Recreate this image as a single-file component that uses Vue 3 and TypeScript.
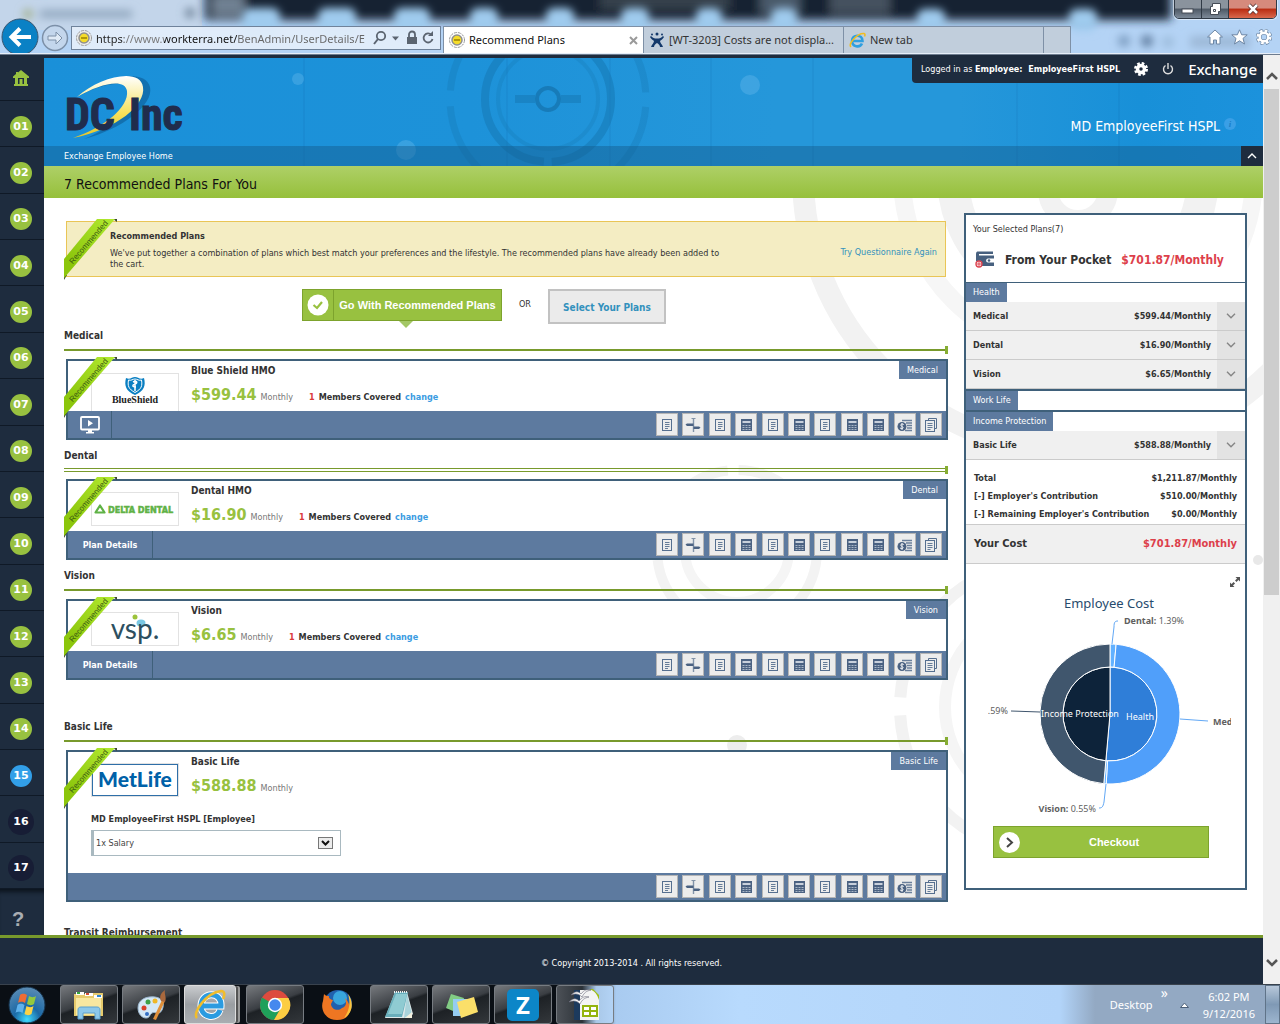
<script setup lang="ts">
import { ref } from 'vue'

type ToolKind = 'doc' | 'sign' | 'calc' | 'money' | 'copy'
interface Plan {
  section: string
  name: string
  price: string
  tag: string
  logo: 'blue' | 'delta' | 'vsp' | 'metlife'
  members?: number
  bar: 'video' | 'details' | 'none'
  doubled?: boolean
}

const tools: ToolKind[] = ['doc', 'sign', 'doc', 'calc', 'doc', 'calc', 'doc', 'calc', 'calc', 'money', 'copy']

const plans: Plan[] = [
  { section: 'Medical', name: 'Blue Shield HMO', price: '$599.44', tag: 'Medical', logo: 'blue', members: 1, bar: 'video' },
  { section: 'Dental', name: 'Dental HMO', price: '$16.90', tag: 'Dental', logo: 'delta', members: 1, bar: 'details', doubled: true },
  { section: 'Vision', name: 'Vision', price: '$6.65', tag: 'Vision', logo: 'vsp', members: 1, bar: 'details' },
  { section: 'Basic Life', name: 'Basic Life', price: '$588.88', tag: 'Basic Life', logo: 'metlife', bar: 'none' },
]

const groups = [
  { title: 'Health', rows: [['Medical', '$599.44/Monthly'], ['Dental', '$16.90/Monthly'], ['Vision', '$6.65/Monthly']] },
  { title: 'Work Life', rows: [] as string[][] },
  { title: 'Income Protection', rows: [['Basic Life', '$588.88/Monthly']] },
]

const totals = [
  ['Total', '$1,211.87/Monthly'],
  ['[-] Employer\'s Contribution', '$510.00/Monthly'],
  ['[-] Remaining Employer\'s Contribution', '$0.00/Monthly'],
]

const steps = Array.from({ length: 17 }, (_, i) => ({
  label: String(i + 1).padStart(2, '0'),
  state: i < 14 ? 'done' : i === 14 ? 'current' : 'todo',
}))

const url = ref('https://www.workterra.net/BenAdmin/UserDetails/E')
const salary = ref('1x Salary')

const CX = 122
const CY = 124
function slice(r0: number, r1: number, from: number, to: number): string {
  const pt = (r: number, f: number) => {
    const a = f * 2 * Math.PI
    return `${(CX + r * Math.sin(a)).toFixed(2)} ${(CY - r * Math.cos(a)).toFixed(2)}`
  }
  const big = to - from > 0.5 ? 1 : 0
  return `M${pt(r1, from)}A${r1} ${r1} 0 ${big} 1 ${pt(r1, to)}L${pt(r0, to)}A${r0} ${r0} 0 ${big} 0 ${pt(r0, from)}Z`
}
const slices = [
  { d: slice(0, 47, 0, 0.5141), fill: '#2f7ed8' },
  { d: slice(0, 47, 0.5141, 1), fill: '#0d233a' },
  { d: slice(47, 70, 0, 0.0139), fill: '#62b1ff' },
  { d: slice(47, 70, 0.0139, 0.5086), fill: '#509ffa' },
  { d: slice(47, 70, 0.5086, 0.5141), fill: '#62b1ff' },
  { d: slice(47, 70, 0.5141, 1), fill: '#40566d' },
]
</script>

<template>
  <div class="desktop">
    <header class="chrome">
      <svg class="glass" viewBox="0 0 1280 54" preserveAspectRatio="none" aria-hidden="true">
        <defs>
          <filter id="soft" x="-5%" y="-50%" width="110%" height="200%"><feGaussianBlur stdDeviation="5" /></filter>
          <filter id="soft2" x="-50%" y="-50%" width="200%" height="200%"><feGaussianBlur stdDeviation="4" /></filter>
        </defs>
        <rect width="1280" height="54" fill="#b4d3f5" />
        <rect x="0" y="-10" width="202" height="40" fill="#c3d5ea" />
        <g filter="url(#soft)">
          <rect x="205" y="-20" width="966" height="40" fill="#172430" />
          <rect x="212" y="-6" width="32" height="22" fill="#6f8092" />
          <rect x="760" y="-10" width="40" height="24" fill="#4a5a6a" />
          <rect x="600" y="-10" width="130" height="20" fill="#34404c" />
          <rect x="830" y="-10" width="60" height="24" fill="#44515e" />
        </g>
        <g filter="url(#soft2)" fill="#9fcbee">
          <rect x="242" y="8" width="38" height="30" rx="8" /><rect x="318" y="8" width="38" height="30" rx="8" />
          <rect x="394" y="8" width="36" height="30" rx="8" /><rect x="470" y="8" width="28" height="24" rx="8" />
          <rect x="546" y="8" width="28" height="24" rx="8" /><rect x="621" y="8" width="28" height="24" rx="8" />
          <rect x="696" y="8" width="26" height="24" rx="8" /><rect x="771" y="8" width="26" height="24" rx="8" />
          <rect x="917" y="9" width="28" height="22" rx="8" /><rect x="1069" y="9" width="28" height="22" rx="8" />
        </g>
        <g filter="url(#soft2)">
          <circle cx="1124" cy="41" r="6" fill="#7c9cc0" /><circle cx="1147" cy="41" r="6" fill="#5f7c9e" />
          <circle cx="1168" cy="42" r="6" fill="#9dbcdc" /><rect x="1190" y="36" width="60" height="12" fill="#9db9d8" />
          <rect x="40" y="10" width="92" height="8" fill="#93a9c0" /><circle cx="28" cy="14" r="5" fill="#a3b08e" />
          <circle cx="190" cy="13" r="5" fill="#6d8197" />
        </g>
      </svg>

      <div class="window-controls">
        <button type="button" aria-label="Minimize"><svg width="14" height="12"><rect x="1" y="6" width="11" height="4" fill="#fff" stroke="#444b55" /></svg></button>
        <button type="button" aria-label="Restore"><svg width="14" height="14"><path d="M4.500 1.500h8v8h-2v3h-8v-8h2zM5.500 7.500h2v2h-2z" fill="#fff" stroke="#444b55" /></svg></button>
        <button type="button" class="close" aria-label="Close"><svg width="14" height="12"><path d="M3 2l8 8M11 2l-8 8" stroke="#4d2a2a" stroke-width="4" /><path d="M3 2l8 8M11 2l-8 8" stroke="#fff" stroke-width="2.500" /></svg></button>
      </div>

      <div class="toolbar">
        <button type="button" class="nav-back" aria-label="Back">
          <svg width="38" height="36" viewBox="0 0 38 36"><circle cx="19" cy="19" r="18" fill="#0a81c5" stroke="#3a5670" /><path d="M30 19H12M19 10.500L10.500 19l8.500 8.500" fill="none" stroke="#fff" stroke-width="4" /></svg>
        </button>
        <button type="button" class="nav-fwd" aria-label="Forward">
          <svg width="28" height="28" viewBox="0 0 28 28"><circle cx="14" cy="14" r="12.500" fill="#c3d6ec" stroke="#7c90a8" stroke-width="1.500" /><path d="M7 12h8V8l6 6-6 6v-4H7z" fill="#dfeaf6" stroke="#7c90a8" /></svg>
        </button>
        <div class="address">
          <svg width="16" height="16" viewBox="0 0 16 16"><circle cx="8" cy="8" r="7.500" fill="#eee" stroke="#999" stroke-dasharray="3 1" /><circle cx="8" cy="8" r="5" fill="#f5dc2a" stroke="#8f8f8f" stroke-width="1.500" /><path d="M5 8h6" stroke="#9a8200" stroke-width="1.500" /></svg>
          <input v-model="url" aria-label="Address" />
          <svg width="64" height="16" viewBox="0 0 64 16">
            <circle cx="9" cy="6" r="4.200" fill="none" stroke="#5b6470" stroke-width="1.800" /><path d="M6 9l-4 5" stroke="#5b6470" stroke-width="2" />
            <path d="M20 6.500h7l-3.500 4z" fill="#5b6470" />
            <rect x="35" y="7" width="10" height="7" fill="#5b6470" /><path d="M37 7V4.500a3 3 0 0 1 6 0V7" fill="none" stroke="#5b6470" stroke-width="1.800" />
            <path d="M59.500 5A4.500 4.500 0 1 0 60.500 9" fill="none" stroke="#5b6470" stroke-width="1.800" /><path d="M61 1v5h-5z" fill="#5b6470" />
          </svg>
        </div>
        <div class="tabs">
          <button type="button" class="tab active">
            <svg width="16" height="16" viewBox="0 0 16 16"><circle cx="8" cy="8" r="7.500" fill="#fff" stroke="#999" stroke-dasharray="3 1" /><circle cx="8" cy="8" r="5" fill="#f5dc2a" stroke="#8f8f8f" stroke-width="1.500" /><path d="M5 8h6" stroke="#9a8200" stroke-width="1.500" /></svg>
            <span>Recommend Plans</span>
            <svg class="tab-close" width="9" height="9" viewBox="0 0 9 9"><path d="M1 1l7 7M8 1L1 8" stroke="#9a9a9a" stroke-width="2" /></svg>
          </button>
          <button type="button" class="tab">
            <svg width="16" height="16" viewBox="0 0 16 16" fill="#14396b"><circle cx="8" cy="2" r="1.500" /><circle cx="3" cy="2.500" r="1" /><circle cx="13" cy="2.500" r="1" /><path d="M2 4c2 2 3 2.500 6 2.500S12 6 14 4l1 1c-1 2-3 3-4 4 0 2 2 3 3 6h-3c0-2-1.500-3-3-4-1.500 1-3 2-3 4H2c1-3 3-4 3-6C4 8 2 7 1 5z" /></svg>
            <span>[WT-3203] Costs are not displa...</span>
          </button>
          <button type="button" class="tab">
            <svg width="17" height="16" viewBox="0 0 17 16"><path d="M4 9h9.500c0-7-10.500-7-10.500 0 0 6 8 7 10 2.500" fill="none" stroke="#2f9fe0" stroke-width="2.600" /><path d="M2 15c-3-3 6-14 13-13.500 1.500.5 1 2 .5 3" fill="none" stroke="#f0bd22" stroke-width="1.600" /></svg>
            <span>New tab</span>
          </button>
          <button type="button" class="tab new" aria-label="Open new tab"></button>
        </div>
        <div class="ie-actions">
          <button type="button" aria-label="Home"><svg width="16" height="16" viewBox="0 0 16 16"><path d="M8 1l7.500 7H13v7H9.500v-4h-3v4H3V8H.5z" fill="#fff" stroke="#6d87a5" /></svg></button>
          <button type="button" aria-label="Favorites"><svg width="17" height="16" viewBox="0 0 17 16"><path d="M8.500.8l2.200 5h5.500L12 9.400l1.500 5.600-5-3.200-5 3.200L5 9.400.8 5.800h5.500z" fill="#fff" stroke="#6d87a5" /></svg></button>
          <button type="button" aria-label="Tools"><svg width="16" height="16" viewBox="0 0 16 16"><circle cx="8" cy="8" r="6.200" fill="none" stroke="#6d87a5" stroke-width="4" stroke-dasharray="2.900 1.970" /><circle cx="8" cy="8" r="4.500" fill="none" stroke="#6d87a5" stroke-width="4" /><circle cx="8" cy="8" r="6" fill="none" stroke="#fff" stroke-width="3" stroke-dasharray="2.500 2.212" /><circle cx="8" cy="8" r="4.300" fill="none" stroke="#fff" stroke-width="2.400" /></svg></button>
        </div>
      </div>
    </header>

    <div class="viewport">
      <div class="page">
        <div class="body">
          <nav class="steps" aria-label="Enrollment steps">
            <a href="#" class="home" aria-label="Home"><svg width="16" height="16" viewBox="0 0 16 16" fill="#98c140"><path d="M8 0l8 6.500V8H0V6.500L3 4V2h2v.5zM2 8h3v6h6V8h3v6h1v2H1v-2h1zM6.500 9h3v5h-3z" fill-rule="evenodd" /></svg></a>
            <a v-for="s in steps" :key="s.label" href="#" class="step" :class="s.state"><span>{{ s.label }}</span></a>
            <a href="#" class="help">?</a>
          </nav>

          <main class="main">
            <div class="banner">
              <svg class="banner-art" viewBox="0 0 1219 108" preserveAspectRatio="xMinYMin slice" aria-hidden="true">
                <g stroke="#0b5f9c" stroke-opacity=".18"><path d="M260 0v108M463 0v108M566 0v108M667 0v108M769 0v108M973 0v108M1075 0v108" /></g>
                <g fill="none" stroke="#1679b5" stroke-opacity=".55">
                  <circle cx="504" cy="41" r="63" stroke-width="8" stroke-dasharray="190 8" stroke-dashoffset="-103" />
                  <circle cx="504" cy="41" r="50" stroke-width="4" stroke-opacity=".3" />
                  <circle cx="504" cy="41" r="98" stroke-width="7" stroke-opacity=".35" stroke-dasharray="138 16" stroke-dashoffset="-8" />
                  <circle cx="504" cy="41" r="11" stroke-width="4" stroke-opacity=".9" />
                  <path d="M471 41h20M517 41h20" stroke-width="8" />
                </g>
                <g fill="#7cc4f2" fill-opacity=".3"><circle cx="254" cy="21" r="6" /><circle cx="362" cy="92" r="10" /><circle cx="706" cy="27" r="10" /></g>
              </svg>
              <div class="banner-main">
                <svg class="brand" width="124" height="72" viewBox="0 0 124 72" role="img" aria-label="DC Inc">
                  <defs><linearGradient id="swoosh" x1="0" y1="0" x2="0" y2="1"><stop offset="0" stop-color="#fff" /><stop offset=".6" stop-color="#f7e15a" /><stop offset="1" stop-color="#e3c52a" /></linearGradient></defs>
                  <path d="M18 19C36 2 80-8 85 12c4 18-28 42-66 52 30-12 54-34 52-46C69 4 40 7 18 19z" fill="#0e5c94" opacity=".6" />
                  <path d="M12 22C34 2 75-8 78 12c3 18-26 42-70 51C40 52 64 32 62 16 60 3 36 8 12 22z" fill="url(#swoosh)" />
                  <text x="0" y="55">DC</text><text x="64" y="55">Inc</text>
                </svg>
                <div class="banner-right">
                  <div class="account">
                    <span>Logged in as <b>Employee:&nbsp; EmployeeFirst HSPL</b></span>
                    <button type="button" class="gear" aria-label="Settings"><svg width="14" height="14" viewBox="0 0 14 14"><circle cx="7" cy="7" r="5.500" fill="none" stroke="#fff" stroke-width="3" stroke-dasharray="2.500 1.820" /><circle cx="7" cy="7" r="3.500" fill="none" stroke="#fff" stroke-width="3.500" /></svg></button>
                    <button type="button" aria-label="Log out"><svg width="12" height="13" viewBox="0 0 12 13"><path d="M3.500 3.500a4.500 4.500 0 1 0 5 0M6 1v6" fill="none" stroke="#ddd" stroke-width="1.400" /></svg></button>
                    <span class="exchange">Exchange</span>
                  </div>
                  <div class="who"><span>MD EmployeeFirst HSPL</span><span class="info">i</span></div>
                </div>
              </div>
              <div class="crumbs">
                <a href="#">Exchange Employee Home</a>
                <button type="button" aria-label="Collapse header"><svg width="10" height="6" viewBox="0 0 10 6"><path d="M1 5l4-4 4 4" fill="none" stroke="#fff" stroke-width="1.400" /></svg></button>
              </div>
            </div>
            <h1>7 Recommended Plans For You</h1>

            <div class="content">
              <svg class="content-art" viewBox="0 0 1219 737" preserveAspectRatio="xMidYMin slice" aria-hidden="true" fill="none" stroke="#f2f2f2">
                <circle cx="1034" cy="-22" r="275" stroke-width="22" />
                <circle cx="1034" cy="-22" r="176" stroke-width="18" stroke="#f6f6f6" />
                <circle cx="1034" cy="-22" r="125" stroke-width="32" />
                <circle cx="1034" cy="-8" r="30" stroke-width="20" />
                <circle cx="693" cy="352" r="80" stroke-width="10" stroke="#f3f3f3" stroke-dasharray="115 11" />
                <circle cx="693" cy="352" r="52" stroke-width="10" stroke="#f5f5f5" />
                <circle cx="1001" cy="509" r="145" stroke-width="12" stroke-dasharray="210 18" stroke-dashoffset="-9" />
                <circle cx="1001" cy="509" r="100" stroke-width="12" stroke="#f5f5f5" />
                <circle cx="693" cy="547" r="10" fill="#ededed" stroke="none" /><circle cx="1214" cy="362" r="5" fill="#e8e8e8" stroke="none" />
              </svg>

              <div class="plans">
                <section class="notice">
                  <svg class="ribbon" width="54" height="61" viewBox="0 0 54 61"><path d="M49 0h4v3zM0 56h3l-3 5z" fill="#3c4a32" /><path d="M33 0h18L0 59V40z" fill="url(#rib)" /><defs><linearGradient id="rib" x1="0" y1="1" x2="1" y2="0"><stop offset=".2" stop-color="#8cc60c" /><stop offset="1" stop-color="#b2ea30" /></linearGradient></defs><text x="-24" y="2" transform="translate(23 26) rotate(-49)">Recommended</text></svg>
                  <div class="notice-text">
                    <h2>Recommended Plans</h2>
                    <p>We've put together a combination of plans which best match your preferences and the lifestyle. The recommended plans have already been added to the cart.</p>
                  </div>
                  <a href="#">Try Questionnaire Again</a>
                </section>

                <div class="choices">
                  <button type="button" class="go">
                    <span class="go-icon"><svg width="22" height="22" viewBox="0 0 22 22"><circle cx="11" cy="11" r="10.500" fill="#fff" /><path d="M6.500 11l3.500 3 5-6" fill="none" stroke="#98c140" stroke-width="2.200" /></svg></span>
                    <span class="go-label">Go With Recommended Plans</span>
                  </button>
                  <span>OR</span>
                  <button type="button" class="select-plans">Select Your Plans</button>
                </div>

                <section v-for="p in plans" :key="p.section" class="plan" :class="p.logo">
                  <h2>{{ p.section }}</h2>
                  <div class="rule" :class="{ doubled: p.doubled }"><i></i><b></b></div>
                  <article class="card">
                    <svg class="ribbon" width="54" height="61" viewBox="0 0 54 61"><path d="M49 0h4v3zM0 56h3l-3 5z" fill="#3c4a32" /><path d="M33 0h18L0 59V40z" fill="url(#rib)" /><text x="-24" y="2" transform="translate(23 26) rotate(-49)">Recommended</text></svg>
                    <div class="summary">
                      <div class="logo">
                        <svg v-if="p.logo === 'blue'" width="86" height="36" viewBox="0 0 86 36">
                          <path d="M34 4c4 2 6-1 9-1s5 3 9 1c2 8 0 13-9 17-9-4-11-9-9-17z" fill="#0a7fc2" /><path d="M36.500 6c3 1 4-1 6.500-1s3.500 2 6.500 1c1 6 0 9-6.500 12.500C36.500 15 35.500 12 36.500 6z" fill="none" stroke="#fff" /><path d="M43 6v11M41 8c4-2 5 1 2 2s-3 3 1 3" fill="none" stroke="#fff" stroke-width="1.500" />
                          <text x="43" y="29" text-anchor="middle" font-family="Liberation Serif, serif" font-weight="700" font-size="10" fill="#222">BlueShield</text>
                        </svg>
                        <svg v-else-if="p.logo === 'delta'" width="86" height="32" viewBox="0 0 86 32">
                          <path d="M8 12.500l4.500 7h-9z" fill="none" stroke="#5fb246" stroke-width="2.200" stroke-linejoin="round" />
                          <text x="16" y="20" font-family="DejaVu Sans Condensed, sans-serif" font-weight="700" font-size="9" fill="#5fb246" stroke="#5fb246" stroke-width=".5">DELTA DENTAL</text>
                        </svg>
                        <svg v-else-if="p.logo === 'vsp'" width="86" height="32" viewBox="0 0 86 32">
                          <circle cx="43" cy="4" r="2.500" fill="#9cc33b" /><ellipse cx="49" cy="10" rx="4.500" ry="3.500" fill="#7ac8e4" />
                          <text x="43" y="26" text-anchor="middle" font-family="Lato, sans-serif" font-size="28" fill="#2d4f60">vsp.</text>
                        </svg>
                        <svg v-else width="86" height="33" viewBox="0 0 86 33">
                          <rect x="0.500" y="0.500" width="85" height="31" fill="#fff" stroke="#2f6fa8" />
                          <text x="43" y="23" text-anchor="middle" font-family="Lato, sans-serif" font-weight="900" font-size="21" fill="#0061a8">MetLife</text>
                        </svg>
                      </div>
                      <div class="info-col">
                        <h3>{{ p.name }}</h3>
                        <p class="cost">
                          <strong>{{ p.price }}</strong><span>Monthly</span>
                          <template v-if="p.members"><em>{{ p.members }}</em><b>Members Covered</b><a href="#">change</a></template>
                        </p>
                      </div>
                      <span class="tag">{{ p.tag }}</span>
                    </div>
                    <div v-if="p.logo === 'metlife'" class="election">
                      <label for="election">MD EmployeeFirst HSPL [Employee]</label>
                      <div class="select-wrap">
                        <select id="election" v-model="salary"><option>1x Salary</option></select>
                        <svg width="15" height="12" viewBox="0 0 15 12"><rect x="0.500" y="0.500" width="14" height="11" fill="#ececec" stroke="#777" /><path d="M4 4l3.500 3.500L11 4" fill="none" stroke="#111" stroke-width="2" /></svg>
                      </div>
                    </div>
                    <div class="bar">
                      <button v-if="p.bar === 'video'" type="button" class="bar-link video" aria-label="Play video"><svg width="20" height="18" viewBox="0 0 20 18"><rect x="1" y="1" width="18" height="12.500" rx="1" fill="none" stroke="#fff" stroke-width="1.800" /><path d="M8 4l5 3.200-5 3.300zM8 14h4v2h2v1.500H6V16h2z" fill="#fff" /></svg></button>
                      <button v-else-if="p.bar === 'details'" type="button" class="bar-link">Plan Details</button>
                      <div class="tools">
                        <button v-for="(t, i) in tools" :key="i" type="button" :aria-label="t">
                          <svg v-if="t === 'doc'" width="16" height="16" viewBox="0 0 16 16" fill="none" stroke="#566f8f"><rect x="3.500" y="2.500" width="9" height="11" /><path d="M6 5.500h4.500M6 7.500h4.500M6 9.500h4.500M6 11.500h3" stroke-width=".9" /></svg>
                          <svg v-else-if="t === 'sign'" width="16" height="16" viewBox="0 0 16 16"><path d="M8.500 1v14" stroke="#8293a8" stroke-width="1.400" /><path d="M6.500 1.500h4" stroke="#8293a8" /><path d="M.5 7.500L2 6.500h6.500v2.500H2zM15.500 10.500L14 12H8.500V9.500H14z" fill="#4b6282" /></svg>
                          <svg v-else-if="t === 'calc'" width="16" height="16" viewBox="0 0 16 16"><rect x="3" y="2" width="11" height="12" fill="#4b6282" /><path d="M4.500 5h8" stroke="#e8edf3" stroke-width="1.600" /><path d="M4.500 8.500h8M4.500 10.500h8M4.500 12.500h8" stroke="#a9b6c7" stroke-width="1.100" stroke-dasharray="2 1" /></svg>
                          <svg v-else-if="t === 'money'" width="16" height="16" viewBox="0 0 16 16"><path d="M5 3.500h10M9 6h6M10 8.500h5M10 11h5M8 13.500h7" stroke="#6a7f9b" stroke-width="1.300" /><circle cx="5" cy="9.500" r="4.500" fill="#4b6282" /><path d="M6.800 7.500c-3-1.500-4 1-1.800 2s1 3-2 1.500M5 6v7" fill="none" stroke="#fff" stroke-width=".9" /></svg>
                          <svg v-else width="16" height="16" viewBox="0 0 16 16" fill="none" stroke="#566f8f"><path d="M5.500 3.500v-2h8v10h-2" /><rect x="2.500" y="3.500" width="9" height="11" /><path d="M4.500 6.500h5M4.500 8.500h5M4.500 10.500h5M4.500 12.500h3" stroke-width=".9" /></svg>
                        </button>
                      </div>
                    </div>
                  </article>
                </section>
                <section class="plan transit"><h2>Transit Reimbursement</h2></section>
              </div>

              <aside class="cart">
                <div class="cart-head">
                  <p>Your Selected Plans(7)</p>
                  <div class="pocket">
                    <svg width="20" height="18" viewBox="0 0 20 18"><path d="M1 3c0-2 1-2.500 2-2.500h15V3H4v1.500h15V15H6V10H1z" fill="#47607f" /><path d="M13 7.500h6v4h-6c-2.500 0-2.500-4 0-4z" fill="#fff" /><circle cx="14" cy="9.500" r="1.300" fill="#47607f" /><circle cx="4" cy="13" r="3" fill="#fff" stroke="#dd4450" stroke-width="1.400" /><path d="M2 13h4M4 11v4" stroke="#dd4450" /></svg>
                    <b>From Your Pocket</b><strong>$701.87/Monthly</strong>
                  </div>
                </div>
                <section v-for="g in groups" :key="g.title" class="group">
                  <h3>{{ g.title }}</h3>
                  <div v-for="r in g.rows" :key="r[0]" class="row">
                    <b>{{ r[0] }}</b><b class="amount">{{ r[1] }}</b>
                    <button type="button" :aria-label="'Expand ' + r[0]"><svg width="10" height="6" viewBox="0 0 10 6"><path d="M1 .8l4 4 4-4" fill="none" stroke="#858585" stroke-width="1.400" /></svg></button>
                  </div>
                </section>
                <dl class="totals">
                  <div v-for="t in totals" :key="t[0]"><dt>{{ t[0] }}</dt><dd>{{ t[1] }}</dd></div>
                </dl>
                <div class="your-cost"><b>Your Cost</b><strong>$701.87/Monthly</strong></div>
                <div class="chart-tools"><button type="button" aria-label="Enlarge chart"><svg width="12" height="12" viewBox="0 0 12 12"><path d="M2.500 9.500l7-7" stroke="#555" stroke-width="2" stroke-dasharray="4 2" /><path d="M6.500 1H11v4.500zM1 6.500V11h4.500z" fill="#555" /></svg></button></div>
                <svg class="chart" width="243" height="230" viewBox="0 0 243 230" role="img" aria-label="Employee Cost">
                  <text x="121" y="18" text-anchor="middle" class="chart-title">Employee Cost</text>
                  <path v-for="(s, i) in slices" :key="i" :d="s.d" :fill="s.fill" stroke="#fff" />
                  <g fill="none" stroke="#62a8f5"><path d="M124 54l2-17c0-5 1-6 4-6" /><path d="M192 129l28 2" /><path d="M118 194l-2 18c-1 5-2 6-5 6" /></g>
                  <path d="M23 121l29 1" stroke="#40566d" />
                  <g class="labels">
                    <text x="136" y="34"><tspan font-weight="700">Dental:</tspan> 1.39%</text>
                    <text x="225" y="135" font-weight="700">Med</text>
                    <text x="20" y="124" text-anchor="end">.59%</text>
                    <text x="108" y="222" text-anchor="end"><tspan font-weight="700">Vision:</tspan> 0.55%</text>
                    <g fill="#fff" text-anchor="middle"><text x="92" y="127">Income Protection</text><text x="152" y="130">Health</text></g>
                  </g>
                </svg>
                <button type="button" class="checkout">
                  <svg width="21" height="21" viewBox="0 0 21 21"><circle cx="10.500" cy="10.500" r="10.500" fill="#fff" /><path d="M8 6l5 4.500L8 15" fill="none" stroke="#444" stroke-width="2" /></svg>
                  <span>Checkout</span>
                </button>
              </aside>
            </div>
          </main>
        </div>
        <footer class="foot">© Copyright 2013-2014 . All rights reserved.</footer>
      </div>
      <div class="scroll" aria-hidden="true">
        <svg width="12" height="8" viewBox="0 0 12 8"><path d="M1 7l5-5 5 5" fill="none" stroke="#555" stroke-width="2.500" /></svg>
        <div class="thumb"></div>
        <svg width="12" height="8" viewBox="0 0 12 8"><path d="M1 1l5 5 5-5" fill="none" stroke="#555" stroke-width="2.500" /></svg>
      </div>
    </div>

    <div class="taskbar">
      <button type="button" class="orb" aria-label="Start">
        <svg width="38" height="38" viewBox="0 0 38 38"><defs><radialGradient id="orbg" cx=".5" cy=".9" r=".9"><stop offset="0" stop-color="#3fdcff" /><stop offset=".4" stop-color="#1b69a6" /><stop offset="1" stop-color="#5c8cb4" /></radialGradient></defs><circle cx="19" cy="19" r="18" fill="url(#orbg)" stroke="#16324a" /><path d="M12 9c3-2 5-1 7 0l-2 8c-2-1-4-2-7 0z" fill="#ef6c33" /><path d="M21 10c2 1 4 2 7 0l-2 8c-3 2-5 1-7 0z" fill="#93c83d" /><path d="M9.500 19c3-2 5-1 7 0l-2 8c-2-1-4-2-7 0z" fill="#5fb2ec" /><path d="M18.500 20c2 1 4 2 7 0l-2 8c-3 2-5 1-7 0z" fill="#fcd246" /></svg>
      </button>
      <button type="button" class="task" aria-label="Explorer"><svg width="34" height="32" viewBox="0 0 34 32"><path d="M2 5h11l2 2h4v-3h12v23H2z" fill="#e6ca6c" /><path d="M4 9h25v17H4z" fill="#f8e7a0" /><path d="M4 3h8v3H4zM13 4h8v3h-8zM22 6h8v3h-8z" fill="#fff" /><path d="M5 3h3v2H5z" fill="#35a83c" /><path d="M14 4h3v2h-3z" fill="#d44b35" /><path d="M25 6h4v2h-4z" fill="#2d85d1" /><path d="M6 30V21c0-2 1-3 3-3h16c2 0 3 1 3 3v9h-5v-6H11v6z" fill="#8dc8ea" stroke="#5aa0cf" /></svg></button>
      <button type="button" class="task" aria-label="Paint"><svg width="32" height="32" viewBox="0 0 32 32"><path d="M3 19C3 10 12 7 20 8s10 7 7 13-7 1-10 3-2 5-6 5-8-4-8-10z" fill="#d5e8f7" stroke="#9db8d0" /><circle cx="9" cy="19" r="2.500" fill="#d8402c" /><circle cx="13" cy="13" r="2.500" fill="#3ea048" /><circle cx="20" cy="12" r="2.500" fill="#efb728" /><circle cx="12" cy="25" r="2" fill="#356fc4" /><path d="M18 30l9-19 3 1-9 19z" fill="#df8f3a" /><path d="M26 12c-2-5 0-8 4-11-1 4 2 8 0 12z" fill="#a9683d" /></svg></button>
      <button type="button" class="task stacked" aria-label="Internet Explorer"><svg width="34" height="32" viewBox="0 0 34 32"><path d="M8 17h20c1-15-20-15-20 0 0 12 16 14 19 4" fill="none" stroke="#fff" stroke-width="7" /><path d="M8 17h20c1-15-20-15-20 0 0 12 16 14 19 4" fill="none" stroke="#2b9be0" stroke-width="5" /><path d="M4 29C-1 24 13 4 28 2c4 0 4 4 2 8" fill="none" stroke="#f1bd2b" stroke-width="2.500" /></svg></button>
      <button type="button" class="task" aria-label="Chrome"><svg width="32" height="32" viewBox="0 0 32 32"><circle cx="16" cy="16" r="15" fill="#dd4b3e" /><path d="M3 8.500A15 15 0 0 0 15 31l7-12-6-3z" fill="#1fa05a" /><path d="M16 9h13.500A15 15 0 0 1 15 31l7-12z" fill="#fccd42" /><circle cx="16" cy="16" r="7.200" fill="#fff" /><circle cx="16" cy="16" r="5.700" fill="#4588ee" /></svg></button>
      <button type="button" class="task flat" aria-label="Firefox"><svg width="32" height="32" viewBox="0 0 32 32"><circle cx="17" cy="15" r="14" fill="#2160ad" /><circle cx="19" cy="9" r="7" fill="#38a5dd" /><path d="M3 5c2 2 3 2 5 2-1 2 2 4 4 4l-2 4c0 5 7 8 11 4 4-1 5-5 3-10 8 8 7 22-8 22C4 31-1 20 2 12z" fill="#ee7622" /><path d="M27 5c6 8 5 19-4 24 5-7 7-14 4-24z" fill="#fbc23a" /></svg></button>
      <button type="button" class="task" aria-label="Notepad"><svg width="34" height="32" viewBox="0 0 34 32"><path d="M13 3h12l6 22-4 4H3z" fill="#dfe9ea" /><path d="M13 3h13l-6 25H3z" fill="#69aebb" /><path d="M14 5h11l-5 20H6z" fill="#8fcbd2" /><path d="M25 5l5 20-8 4z" fill="#a9d3da" /><path d="M23 29l7-6v6z" fill="#f3f0dd" /><path d="M12 3h14" stroke="#eee" stroke-width="2" stroke-dasharray="1 1" /></svg></button>
      <button type="button" class="task" aria-label="Sticky Notes"><svg width="34" height="32" viewBox="0 0 34 32"><path d="M7 5l13 4-4 16-14-6z" fill="#82cc84" /><path d="M9 10l14 0v17H9z" fill="#95ccf1" /><path d="M13 13l17-5 4 15-17 6z" fill="#fbdf69" /></svg></button>
      <button type="button" class="task" aria-label="Z"><span class="z-app">Z</span></button>
      <button type="button" class="task light" aria-label="OpenOffice"><svg width="34" height="34" viewBox="0 0 34 34"><path d="M6 2h6v30H6z" fill="#1c3a5d" /><path d="M12 2h13l6 6v24H12z" fill="#f4f4f4" /><path d="M21 1h4l6 6v5c-2-6-4-9-10-11z" fill="#9fbf16" /><path d="M14 17h16v12H14z" fill="#94b40f" /><path d="M16 19h5v3h-5zM23 19h5v3h-5zM16 24h5v3h-5zM23 24h5v3h-5z" fill="#fff" /><path d="M3 7c5-5 8-3 10-1 3-4 6-5 10-4-5 1-7 3-9 7-3-3-6-4-11-2zM1 14c5-5 8-3 10-1 3-4 6-5 10-4-5 1-7 3-9 7-3-3-6-4-11-2z" fill="#f8f8f8" stroke="#667" stroke-width=".6" /></svg></button>
      <div class="tray">
        <span>Desktop</span><span class="more">»</span>
        <svg width="9" height="6" viewBox="0 0 9 6"><path d="M.5 5.500L4.500 1l4 4.500z" fill="#fff" stroke="#4b5f78" /></svg>
        <div class="clock"><span>6:02 PM</span><span>9/12/2016</span></div>
      </div>
      <button type="button" class="show-desktop" aria-label="Show desktop"></button>
    </div>
  </div>
</template>

<style>
body { overflow: hidden; }
</style>

<style scoped>
* { box-sizing: border-box; }
h1, h2, h3, p, dl, dd { margin: 0; }
button { margin: 0; padding: 0; border: 0; background: none; font: inherit; color: inherit; cursor: pointer; }
a { text-decoration: none; color: inherit; }
svg { display: block; flex: none; }

.desktop { display: flex; flex-direction: column; height: 100vh; overflow: hidden; font: 9px/12px "DejaVu Sans Condensed", "DejaVu Sans", sans-serif; color: #333; }

/* Browser frame */
.chrome { position: relative; flex: none; height: 55px; border-bottom: 1px solid #6d7c8f; font: 11px/16px "Noto Sans", sans-serif; }
.glass { position: absolute; inset: 0; width: 100%; height: 100%; }
.window-controls { position: absolute; top: -1px; right: 3px; z-index: 1; display: flex; border: 1px solid #303a46; border-radius: 0 0 5px 5px; overflow: hidden; box-shadow: 0 0 0 1px rgba(255, 255, 255, .5); }
.window-controls button { display: flex; align-items: center; justify-content: center; width: 27px; height: 18px; background: linear-gradient(#8a939d 45%, #4d5865 50%, #7d8a98); border-right: 1px solid #303a46; }
.window-controls .close { width: 47px; background: linear-gradient(#d68a7c 45%, #b92c12 50%, #d9694d); border-right: 0; }
.toolbar { position: relative; display: flex; align-items: flex-end; height: 54px; padding-left: 1px; border-bottom: 1px solid #e6eef8; }
.nav-back { width: 38px; height: 35px; overflow: hidden; }
.nav-fwd { width: 28px; margin: 0 4px 1px 2px; }
.address { display: flex; align-items: center; width: 370px; height: 24px; margin: 0 2px 3px -2px; padding: 0 4px; border: 1px solid #6f829a; background: rgba(232, 240, 250, .85); gap: 4px; }
.address input { flex: 1; min-width: 0; height: 20px; padding: 0; border: 0; outline: 0; font: inherit; color: transparent; background: linear-gradient(90deg, #222 28px, #777 28px, #777 68px, #111 68px, #111 141px, #666 141px); -webkit-background-clip: text; background-clip: text; }
.tabs { display: flex; height: 27px; border-top: 1px solid #7e90a6; border-left: 1px solid #7e90a6; }
.tab { display: flex; align-items: center; gap: 4px; width: 200px; padding: 0 5px; border-right: 1px solid #7e90a6; background: #c1cedc; color: #333; white-space: nowrap; }
.tab.active { background: #fff; color: #111; }
.tab.new { width: 27px; }
.tab-close { margin-left: auto; }
.ie-actions { display: flex; gap: 8px; margin-left: auto; padding: 0 8px 8px 0; }

.viewport { display: flex; flex: 1; min-height: 0; }
.page { display: flex; flex: 1; flex-direction: column; min-width: 0; }
.body { display: flex; flex: 1; min-height: 0; background: #1e2c3e; }

/* Steps */
.steps { display: flex; flex: none; flex-direction: column; width: 44px; font-family: "DejaVu Sans", sans-serif; font-weight: 700; font-size: 11px; color: #fff; }
.steps a { display: flex; align-items: center; justify-content: center; }
.home { height: 46px; padding-right: 3px; border-bottom: 1px solid #0f1926; }
.step { flex: 1; padding-right: 2px; padding-top: 6px; border-bottom: 1px solid #0f1926; }
.step span { display: flex; align-items: center; justify-content: center; width: 22px; height: 22px; border-radius: 50%; background: #98c140; }
.step.current span { background: #329fe8; }
.step.todo span { width: 26px; height: 26px; background: #171d35; }
.steps .help { height: 46px; padding: 14px 8px 0 0; box-shadow: inset 0 6px 4px -3px #0c141e; font: 700 20px/24px "Liberation Sans", sans-serif; color: #a9adb2; }

/* Header */
.main { display: flex; flex: 1; flex-direction: column; min-width: 0; padding-top: 3px; }
.banner { position: relative; flex: none; background: linear-gradient(90deg, #1a90d9, #1d92d9 35%, #2597da 60%, #2597da 75%, #1890d8 90%, #1c92dc); overflow: hidden; }
.banner-art { position: absolute; inset: 0; width: 100%; height: 100%; }
.banner-main { position: relative; display: flex; justify-content: space-between; height: 88px; padding-left: 21px; color: #fff; }
.brand { margin-top: 17px; overflow: visible; }
.brand text { font: 700 44px "Liberation Sans Narrow", "Roboto Condensed", "DejaVu Sans Condensed", sans-serif; fill: #202c4c; stroke: #202c4c; stroke-width: 1px; }
.banner-right { display: flex; flex-direction: column; align-items: flex-end; }
.account { display: flex; align-items: center; height: 25px; padding: 0 6px 4px 9px; border-bottom-left-radius: 4px; background: #1e2c3e; }
.account .gear { margin: 0 14px 0 14px; }
.exchange { margin-left: 14px; font: 500 15px/20px "Noto Sans", sans-serif; }
.who { display: flex; gap: 4px; padding: 35px 27px 0 0; font: 14px/16px "DejaVu Sans Condensed", sans-serif; }
.info { width: 12px; height: 12px; border-radius: 50%; background: #3a9fe6; color: #1a80c6; font: italic 700 9px/12px "Liberation Serif", serif; text-align: center; }
.crumbs { position: relative; display: flex; align-items: center; justify-content: space-between; height: 20px; padding-left: 20px; background: rgba(20, 90, 140, .45); color: #fff; }
.crumbs button { display: flex; align-items: center; justify-content: center; width: 22px; height: 20px; background: #1e2c3e; }
h1 { flex: none; height: 32px; padding-left: 20px; background: linear-gradient(#aed067, #96c03b); color: #111; font: 14px/36px "DejaVu Sans Condensed", sans-serif; }

/* Content */
.content { position: relative; display: flex; flex: 1; align-items: flex-start; gap: 16px; min-height: 0; padding: 15px 16px 0 20px; overflow: hidden; background: #fff; }
.content-art { position: absolute; inset: 0; width: 100%; height: 100%; }
.plans { position: relative; flex: 1; min-width: 0; }
.ribbon { position: absolute; left: -4px; top: -4px; z-index: 1; }
.ribbon text { font: 8px "Liberation Sans", sans-serif; fill: #3d5c12; }
.notice { position: relative; display: flex; align-items: flex-start; margin: 8px 2px 12px; height: 56px; padding: 8px 8px 0 43px; border: 1px solid #e9c556; background: #f4edc3; }
.notice .ribbon { left: -3px; top: -3px; }
.notice-text { flex: 1; }
.notice h2 { font-size: 9px; line-height: 12px; font-weight: 700; }
.notice p { width: 620px; padding-top: 6px; line-height: 11px; }
.notice a { padding-top: 16px; color: #3391bd; }
.choices { display: flex; align-items: flex-start; justify-content: center; gap: 17px; height: 35px; padding-right: 44px; }
.choices > span { line-height: 31px; }
.go { position: relative; display: flex; width: 200px; height: 32px; border: 1px solid #7da32d; background: #98c140; color: #fff; font: 700 11px/30px "Liberation Sans", sans-serif; }
.go::after { content: ""; position: absolute; left: 96px; top: 31px; border: 7px solid transparent; border-top-color: #a3c765; border-bottom: 0; }
.go-icon { display: flex; align-items: center; justify-content: center; width: 31px; height: 30px; border-right: 1px solid #7da32d; }
.go-label { flex: 1; }
.select-plans { width: 118px; height: 35px; border: 2px solid #c2c2c2; background: #ebebeb; color: #3391bd; font: 700 10px/14px "DejaVu Sans Condensed", sans-serif; padding-top: 2px; }

.plan { height: 120px; }
.plan h2 { padding: 6px 0 3px; font-size: 10px; line-height: 12px; }
.rule { display: flex; align-items: center; height: 8px; margin: 1px 0 5px; }
.rule i { flex: 1; height: 2px; background: #789a2c; }
.rule.doubled i { height: 4px; border: 1px solid #789a2c; border-width: 1px 0; background: none; }
.rule b { width: 3px; height: 8px; background: #86ad33; }
.card { position: relative; margin-left: 2px; border: 2px solid #3f607a; background: #fff; }
.summary { display: flex; align-items: flex-start; height: 50px; padding-left: 23px; }
.logo { display: flex; width: 88px; height: 34px; margin-top: 11px; border: 1px solid #e2e2e2; }
.logo svg { overflow: visible; }
.blue .logo { height: 38px; margin-top: 12px; border-bottom: 0; }
.metlife .logo { margin-top: 11px; }
.info-col { flex: 1; padding: 2px 0 0 12px; }
.info-col h3 { font-size: 10px; line-height: 16px; }
.cost { display: flex; align-items: baseline; line-height: 32px; color: #777; }
.cost strong { font-size: 16px; color: #98c140; }
.cost span { margin-left: 4px; }
.cost em { margin-left: 16px; font-style: normal; font-weight: 700; color: #d93a3a; }
.cost b { margin: 0 4px; color: #333; }
.cost a { font-weight: 700; color: #3a9ce2; }
.tag { padding: 0 8px; background: #5d7a9f; color: #fff; line-height: 18px; }
.election { padding: 9px 23px 17px; }
.election label { display: block; font-weight: 700; line-height: 16px; margin-bottom: 3px; }
.select-wrap { display: grid; align-items: center; width: 250px; }
.select-wrap > * { grid-area: 1 / 1; }
.select-wrap svg { margin-left: 227px; pointer-events: none; }
select { appearance: none; width: 250px; height: 26px; padding: 0 2px; border: 1px solid #a9b9c0; border-left-width: 3px; border-radius: 0; background: #fff; color: #444; font: inherit; }
.bar { display: flex; align-items: center; height: 27px; background: #5d7a9f; }
.bar-link { display: flex; align-items: center; justify-content: center; width: 85px; height: 27px; border-right: 1px solid #3f607a; color: #fff; font-weight: 700; }
.bar-link.video { width: 44px; }
.tools { display: flex; justify-content: space-between; width: 286px; margin: 0 4px 0 auto; }
.tools button { display: flex; align-items: center; justify-content: center; width: 22px; height: 23px; border: 1px solid #b5b5b5; background: #ececec; }
.plan.vsp { margin-bottom: 31px; }
.plan.metlife { height: 206px; }
.plan.transit { height: 20px; }

/* Cart */
.cart { position: relative; display: flex; flex: none; flex-direction: column; width: 283px; height: 677px; border: 2px solid #3f607a; background: #fff; }
.cart-head { height: 68px; padding: 8px 8px 0 7px; border-bottom: 1px solid #3f607a; }
.pocket { display: flex; align-items: center; gap: 10px; padding-top: 16px; font-size: 12px; line-height: 16px; }
.pocket svg { margin-left: 2px; }
.pocket strong { color: #dd3f4b; }
.group { border-bottom: 2px solid #3f607a; }
.group:last-of-type { border-bottom: 0; }
.group h3 { width: fit-content; padding: 0 7px; background: #5d7a9f; color: #fff; font-size: 9px; font-weight: 400; line-height: 19px; }
.row { display: flex; align-items: center; height: 29px; border-bottom: 1px solid #cbcbcb; background: #f0f0f0; padding-left: 7px; }
.row .amount { margin-left: auto; padding-right: 6px; }
.row button { display: flex; align-items: center; justify-content: center; width: 28px; height: 28px; background: #e3e3e3; }
.totals { padding: 9px 8px 1px; font-weight: 700; }
.totals div { display: flex; justify-content: space-between; line-height: 18px; }
.your-cost { display: flex; align-items: center; justify-content: space-between; height: 40px; padding: 0 8px; border: 1px solid #cbcbcb; border-width: 1px 0; background: #f0f0f0; font-size: 11px; }
.your-cost strong { color: #dd3f4b; }
.chart-tools { display: flex; justify-content: flex-end; height: 26px; padding: 9px 4px 0 0; }
.chart { margin-left: 22px; overflow: hidden; }
.chart-title { font: 13px "Noto Sans", sans-serif; fill: #274b6d; }
.labels { font: 9px "Noto Sans", sans-serif; fill: #606060; }
.labels g { fill: #fff; }
.checkout { display: flex; align-items: center; width: 216px; height: 32px; margin: 6px 0 0 27px; padding-left: 5px; border: 1px solid #7da32d; background: #98c140; color: #fff; font: 700 11px/16px "Liberation Sans", sans-serif; }
.checkout span { flex: 1; }

.foot { flex: none; height: 49px; border-top: 3px solid #789a2c; background: #1e2c3e; color: #fff; line-height: 50px; text-align: center; }
.scroll { display: flex; flex: none; flex-direction: column; align-items: center; width: 17px; padding: 17px 0; background: #f0f0f0; }
.thumb { width: 15px; height: 506px; margin: 9px 0 auto; background: #cdcdcd; }

/* Taskbar */
.taskbar { display: flex; flex: none; align-items: stretch; height: 40px; border-top: 1px solid #39424d; background: linear-gradient(90deg, #0a0f15 590px, #a9cbf0 616px, #b8dafd 740px, #b2d4f9 1060px, #93a9c3 1095px, #93a9c3); color: #fff; font: 11px/17px "Noto Sans", sans-serif; }
.orb { width: 54px; padding-left: 8px; margin-right: 6px; }
.task { display: flex; align-items: center; justify-content: center; width: 58px; margin-right: 4px; border: 1px solid #777c82; border-radius: 3px; background: linear-gradient(160deg, #76797d, #3a3e43 45%, #1d2125 50%, #33373b); }
.task.stacked { width: 52px; margin-right: 10px; background: linear-gradient(#c9cbce, #9a9ea2 50%, #a9adb1); border-color: #ddd; box-shadow: 3px 0 0 -1px #555, 5px 0 0 -1px #999; }
.task.flat { border-color: transparent; background: none; }
.task.light { background: linear-gradient(90deg, #4c5157, #2c3238 45%, #a9c8e8 70%, #b3d3f5); }
.z-app { width: 32px; height: 32px; border-radius: 5px; background: #0c86c8; font: 700 24px/32px "Noto Sans", sans-serif; text-align: center; }
.tray { display: flex; align-items: center; margin-left: auto; }
.more { align-self: flex-start; margin: -1px 12px 0 8px; font-size: 14px; }
.clock { display: flex; flex-direction: column; align-items: center; margin: 0 10px 0 14px; }
.show-desktop { width: 15px; border: 1px solid #5f7388; background: linear-gradient(#b8c8da, #7f99b5 50%, #9db5cf); }
</style>
